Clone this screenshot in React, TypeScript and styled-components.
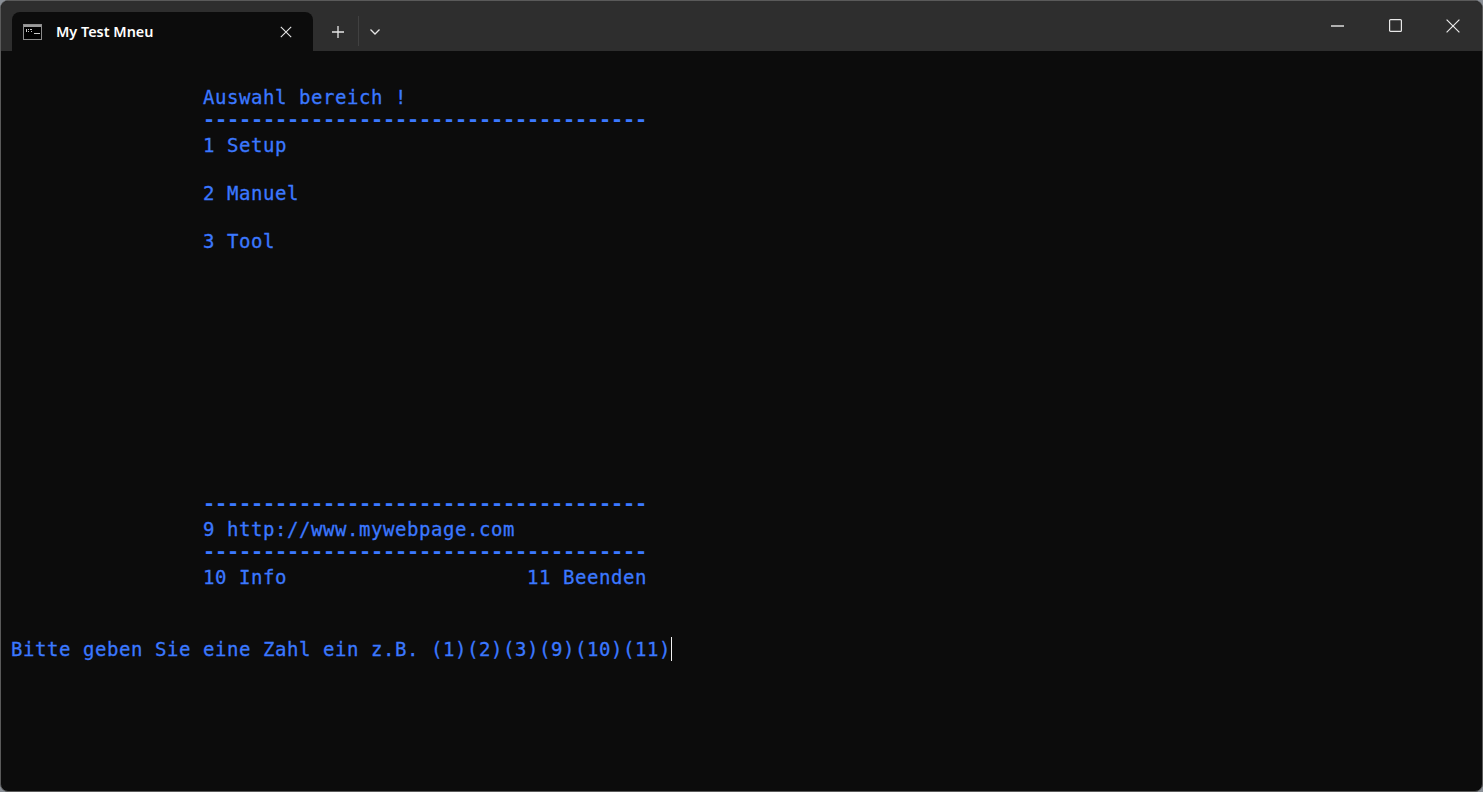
import React from "react";
import styled, { createGlobalStyle } from "styled-components";

const Global = createGlobalStyle`
  html, body { margin: 0; padding: 0; background: #8a8f96; }
  #root { width: 1483px; height: 792px; }
`;

const Frame = styled.div`
  width: 1483px;
  height: 792px;
  box-sizing: border-box;
  border: 1px solid #5a5a5a;
  border-radius: 8px;
  overflow: hidden;
  display: flex;
  flex-direction: column;
  background: #0c0c0c;
`;

const TitleBar = styled.div`
  height: 50px;
  flex: none;
  background: #2e2e2e;
  display: flex;
  align-items: flex-end;
  padding-left: 11px;
`;

const Tab = styled.div`
  width: 301px;
  height: 39px;
  box-sizing: border-box;
  background: #0c0c0c;
  border-radius: 8px 8px 0 0;
  display: flex;
  align-items: center;
  padding: 0 21px 0 11px;
  color: #fff;
  font: 600 14.4px "Noto Sans", "Inter", sans-serif;
`;

const TabTitle = styled.span`
  margin-left: 13px;
  flex: 1;
`;

const IconBtn = styled.div<{ $w: number }>`
  width: ${(p) => p.$w}px;
  height: 39px;
  display: flex;
  align-items: center;
  justify-content: center;
  color: #e6e6e6;
  flex: none;
`;

const PlusBtn = styled(IconBtn)`
  box-sizing: border-box;
  padding-left: 5px;
`;

const Divider = styled.div`
  width: 1px;
  height: 30px;
  margin-bottom: 5px;
  background: #414141;
  flex: none;
`;

const Spacer = styled.div`
  flex: 1;
`;

const WindowButtons = styled.div`
  display: flex;
  align-self: flex-start;
`;

const WinBtn = styled.div`
  width: 58px;
  height: 49px;
  display: flex;
  align-items: center;
  justify-content: center;
  color: #e8e8e8;
`;

const Console = styled.div`
  flex: 1;
  padding: 10px 0 0 10px;
  color: #3b78ff;
  font-family: "DejaVu Sans Mono", monospace;
  overflow: hidden;
`;

const Row = styled.div`
  height: 24px;
  white-space: pre;
  font-size: 19px;
  letter-spacing: 0.56px;
  line-height: 24px;
  -webkit-text-stroke: 0.3px #3b78ff;
`;

const DashRow = styled(Row)`
  font-size: 20px;
  font-weight: 700;
  letter-spacing: -0.04px;
  line-height: 21px;
  -webkit-text-stroke: 0;
`;

const Cursor = styled.span`
  display: inline-block;
  width: 1px;
  height: 24px;
  background: #f2f2f2;
  vertical-align: top;
`;

const dash = "                -------------------------------------";

const lines = [
  "",
  "                Auswahl bereich !",
  dash,
  "                1 Setup",
  "",
  "                2 Manuel",
  "",
  "                3 Tool",
  "",
  "",
  "",
  "",
  "",
  "",
  "",
  "",
  "",
  "",
  dash,
  "                9 http://www.mywebpage.com",
  dash,
  "                10 Info                    11 Beenden",
  "",
  "",
];

export default function App() {
  return (
    <>
      <Global />
      <Frame>
        <TitleBar>
          <Tab>
            <svg width="20" height="16" viewBox="0 0 20 16">
              <rect x="0.5" y="0.5" width="18" height="15" fill="#000" stroke="#8c8c8c" />
              <rect x="1" y="1" width="17" height="2" fill="#9a9a9a" />
              <path d="M3 5h1v3H3zM5 5h1v1H5zM5 7h1v1H5zM7 5h2v1H7zM8 7h1v1H8zM11 9h6v1h-6z" fill="#c8c8c8" />
            </svg>
            <TabTitle>My Test Mneu</TabTitle>
            <svg width="12" height="12" viewBox="0 0 12 12" fill="none" stroke="#e6e6e6" strokeWidth="1.1">
              <path d="M0.8 0.8l10.4 10.4M11.2 0.8L0.8 11.2" />
            </svg>
          </Tab>
          <PlusBtn $w={45}>
            <svg width="14" height="14" viewBox="0 0 14 14" stroke="currentColor" strokeWidth="1.3">
              <path d="M7 1v12M1 7h12" />
            </svg>
          </PlusBtn>
          <Divider />
          <IconBtn $w={32}>
            <svg width="12" height="8" viewBox="0 0 12 8" fill="none" stroke="currentColor" strokeWidth="1.3">
              <path d="M1.5 1.5L6 6l4.5-4.5" />
            </svg>
          </IconBtn>
          <Spacer />
          <WindowButtons>
            <WinBtn>
              <svg width="13" height="2" viewBox="0 0 13 2">
                <rect width="13" height="1.4" y="0.3" fill="currentColor" />
              </svg>
            </WinBtn>
            <WinBtn>
              <svg width="13" height="13" viewBox="0 0 13 13" fill="none" stroke="currentColor" strokeWidth="1.2">
                <rect x="0.6" y="0.6" width="11.8" height="11.8" rx="1" />
              </svg>
            </WinBtn>
            <WinBtn>
              <svg width="14" height="14" viewBox="0 0 14 14" fill="none" stroke="currentColor" strokeWidth="1.2">
                <path d="M0.6 0.6l12.8 12.8M13.4 0.6L0.6 13.4" />
              </svg>
            </WinBtn>
          </WindowButtons>
        </TitleBar>
        <Console>
          {lines.map((l, i) => (l === dash ? <DashRow key={i}>{l}</DashRow> : <Row key={i}>{l}</Row>))}
          <Row>
            Bitte geben Sie eine Zahl ein z.B. (1)(2)(3)(9)(10)(11)
            <Cursor />
          </Row>
        </Console>
      </Frame>
    </>
  );
}
